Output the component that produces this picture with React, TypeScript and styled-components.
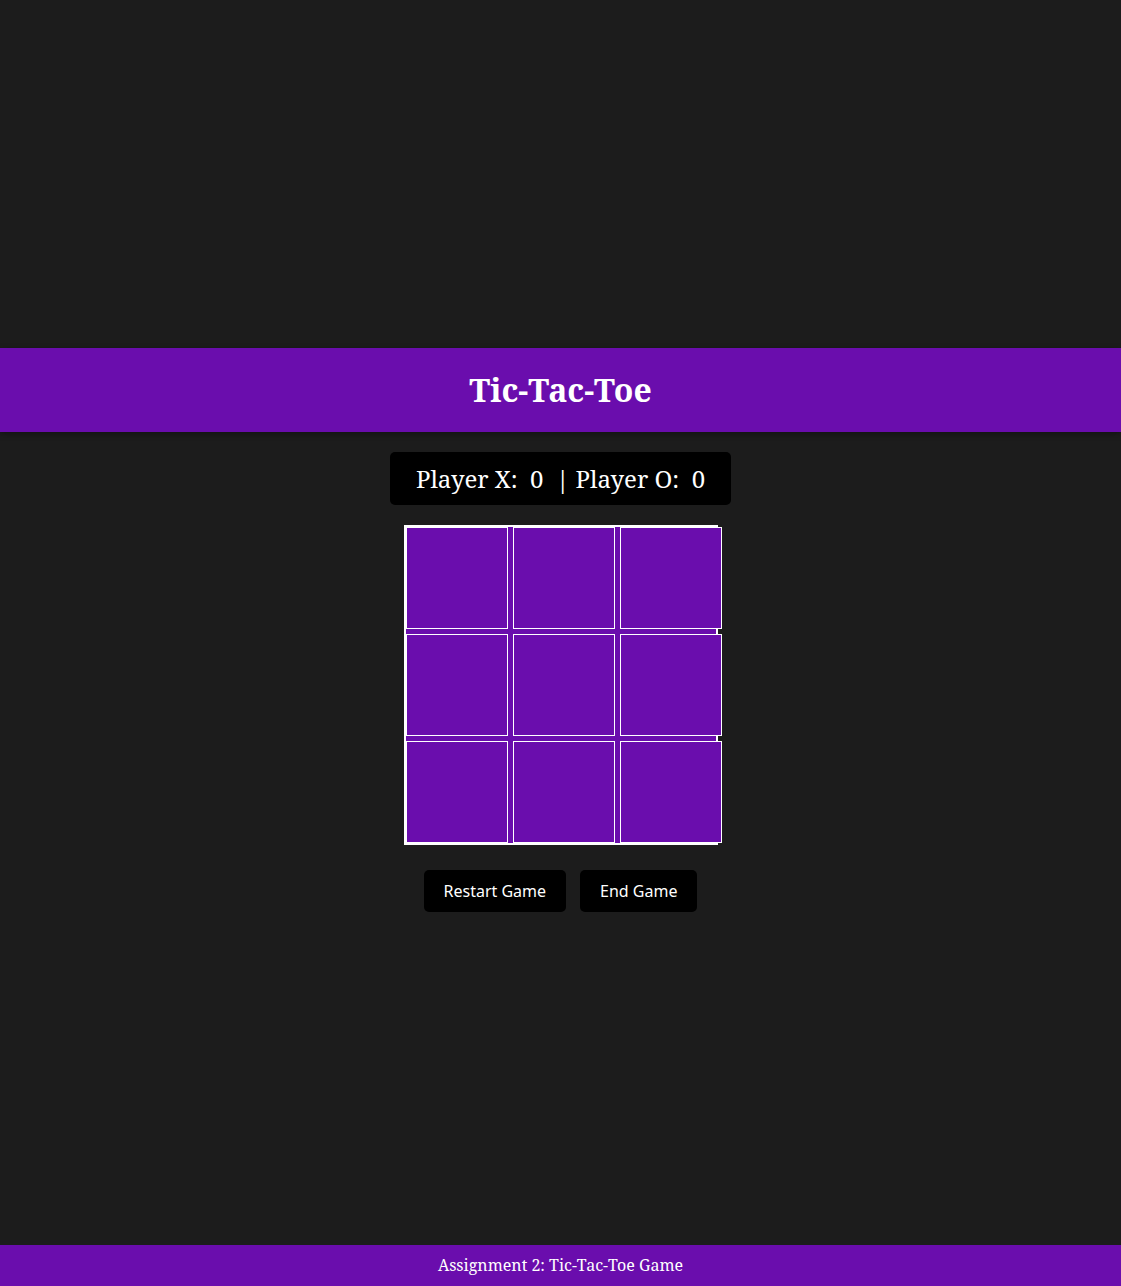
import React, { useState } from 'react'
import styled, { createGlobalStyle } from 'styled-components'

const PURPLE = '#6a0dad'

const GlobalStyle = createGlobalStyle`
  html, body {
    margin: 0;
    padding: 0;
    background: #1c1c1c;
    color: #ffffff;
    font-family: 'Noto Serif', 'DejaVu Serif', serif;
  }
  * {
    box-sizing: content-box;
  }
`

const Page = styled.div`
  min-height: 100vh;
  display: flex;
  flex-direction: column;
`

const Main = styled.main`
  flex: 1;
  display: flex;
  flex-direction: column;
  justify-content: center;
  align-items: center;
  padding-top: 15px;
`

const Header = styled.header`
  align-self: stretch;
  background: ${PURPLE};
  padding: 20px 0;
  text-align: center;
  box-shadow: 0 2px 6px rgba(0, 0, 0, 0.35);
`

const Title = styled.h1`
  margin: 0;
  font-size: 32px;
  line-height: 44px;
  font-weight: 700;
`

const ScoreBoard = styled.div`
  margin-top: 20px;
  background: #000000;
  border-radius: 5px;
  padding: 10px 26px;
  font-size: 24px;
  white-space: pre;
`

const Board = styled.div`
  margin-top: 20px;
  width: 310px;
  border: 2px solid #ffffff;
  background: ${PURPLE};
  display: grid;
  grid-template-columns: repeat(3, 102px);
  grid-auto-rows: 102px;
  gap: 5px;
`

const Cell = styled.button<{ $mark: string }>`
  width: 100px;
  height: 100px;
  padding: 0;
  margin: 0;
  border: 1px solid #ffffff;
  background: ${PURPLE};
  color: #ffffff;
  font-size: 48px;
  font-family: 'Noto Serif', serif;
  cursor: ${(p) => (p.$mark ? 'default' : 'pointer')};
`

const Controls = styled.div`
  margin-top: 25px;
  display: flex;
  gap: 14px;
`

const ActionButton = styled.button`
  background: #000000;
  color: #ffffff;
  border: none;
  border-radius: 5px;
  padding: 10px 20px;
  font-family: 'Noto Sans', 'Open Sans', sans-serif;
  font-size: 16px;
  line-height: 22px;
  cursor: pointer;
`

const Footer = styled.footer`
  background: ${PURPLE};
  padding: 10px 0;
  text-align: center;
  font-size: 16px;
  line-height: 21px;
`

export default function App() {
  const [cells, setCells] = useState<string[]>(Array(9).fill(''))
  const [turn, setTurn] = useState<'X' | 'O'>('X')
  const [score] = useState({ X: 0, O: 0 })

  const play = (i: number) => {
    if (cells[i]) return
    const next = [...cells]
    next[i] = turn
    setCells(next)
    setTurn(turn === 'X' ? 'O' : 'X')
  }

  const restart = () => {
    setCells(Array(9).fill(''))
    setTurn('X')
  }

  return (
    <Page>
      <GlobalStyle />
      <Main>
        <Header>
          <Title>Tic-Tac-Toe</Title>
        </Header>
        <ScoreBoard>
          {`Player X:  ${score.X}  | Player O:  ${score.O}`}
        </ScoreBoard>
        <Board>
          {cells.map((c, i) => (
            <Cell key={i} $mark={c} onClick={() => play(i)}>
              {c}
            </Cell>
          ))}
        </Board>
        <Controls>
          <ActionButton onClick={restart}>Restart Game</ActionButton>
          <ActionButton onClick={restart}>End Game</ActionButton>
        </Controls>
      </Main>
      <Footer>Assignment 2: Tic-Tac-Toe Game</Footer>
    </Page>
  )
}
